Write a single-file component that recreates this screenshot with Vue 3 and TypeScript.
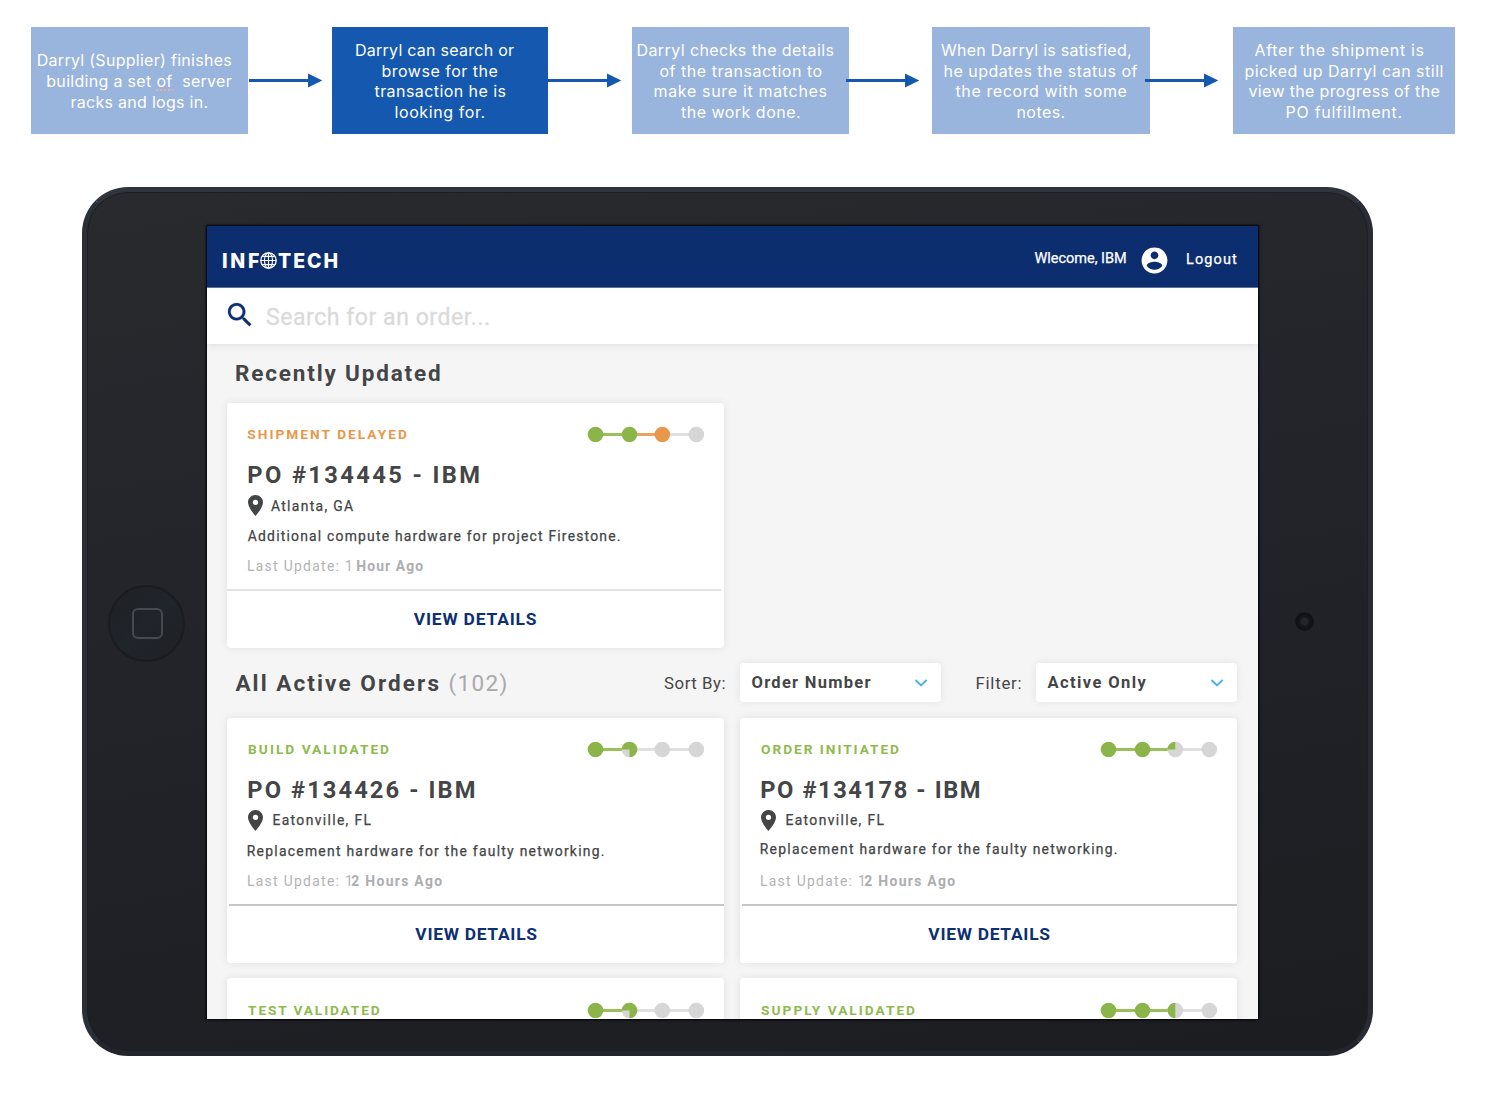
<script setup lang="ts">
import type { Directive } from 'vue'

interface Line { text: string; width: number; typo?: [string, string, string] }
interface Step { lines: Line[]; active?: boolean; width: number; gap: number; shift: number }
interface Dot { x: number; base: string; pie?: string }
interface Body {
  title: Line
  place: Line
  placeGap: number
  note: Line
  noteShift: number
  when: Line
  action: Line
  actionShift: number
  digit: boolean
}
interface Order {
  status: Line
  tone: 'green' | 'orange'
  progress: number
  body?: Body
}

const canvas = document.createElement('canvas').getContext('2d')!

// Tracks a run of text out so that its ink fills the given width.
const vFit: Directive<HTMLElement, number> = {
  mounted(el, { value }) {
    const style = getComputedStyle(el)
    const text = el.textContent ?? ''
    canvas.font = `${style.fontWeight} ${style.fontSize} ${style.fontFamily}`
    const m = canvas.measureText(text)
    const ink = m.actualBoundingBoxLeft + m.actualBoundingBoxRight
    el.style.width = `${value}px`
    el.style.textIndent = `${m.actualBoundingBoxLeft}px`
    el.style.letterSpacing = `${(value - ink) / (text.length - 1)}px`
  },
}

const steps: Step[] = [
  {
    width: 217, gap: 84, shift: 1,
    lines: [
      { text: 'Darryl (Supplier) finishes', width: 193.5 },
      { text: 'building a set of  server', width: 184.5, typo: ['building a set ', 'of', '  server'] },
      { text: 'racks and logs in.', width: 136 },
    ],
  },
  {
    width: 216, gap: 84, shift: 0, active: true,
    lines: [
      { text: 'Darryl can search or', width: 158 },
      { text: 'browse for the', width: 115 },
      { text: 'transaction he is', width: 131 },
      { text: 'looking for.', width: 89 },
    ],
  },
  {
    width: 217, gap: 83, shift: -3,
    lines: [
      { text: 'Darryl checks the details', width: 196 },
      { text: 'of the transaction to', width: 162 },
      { text: 'make sure it matches', width: 172 },
      { text: 'the work done.', width: 119 },
    ],
  },
  {
    width: 218, gap: 83, shift: -5,
    lines: [
      { text: 'When Darryl is satisfied,', width: 190 },
      { text: 'he updates the status of', width: 193 },
      { text: 'the record with some', width: 171 },
      { text: 'notes.', width: 47 },
    ],
  },
  {
    width: 222, gap: 0, shift: 0,
    lines: [
      { text: 'After the shipment is', width: 169 },
      { text: 'picked up Darryl can still', width: 197 },
      { text: 'view the progress of the', width: 191 },
      { text: 'PO fulfillment.', width: 115 },
    ],
  },
]

const recent: Order = {
  status: { text: 'SHIPMENT DELAYED', width: 160 }, tone: 'orange', progress: 3,
  body: {
    title: { text: 'PO #134445 - IBM', width: 231 },
    place: { text: 'Atlanta, GA', width: 82 }, placeGap: 8,
    note: { text: 'Additional compute hardware for project Firestone.', width: 372 }, noteShift: 0,
    digit: false, when: { text: 'Hour Ago', width: 67 },
    action: { text: 'VIEW DETAILS', width: 123 }, actionShift: -1,
  },
}

const common = {
  place: { text: 'Eatonville, FL', width: 98 }, placeGap: 10.5,
  note: { text: 'Replacement hardware for the faulty networking.', width: 356 }, noteShift: 0,
  digit: true, when: { text: '2 Hours Ago', width: 91 },
  action: { text: 'VIEW DETAILS', width: 122 }, actionShift: 1,
}
const orders: Order[] = [
  { status: { text: 'BUILD VALIDATED', width: 141 }, tone: 'green', progress: 1.75, body: { ...common, title: { text: 'PO #134426 - IBM', width: 226.5 } } },
  { status: { text: 'ORDER INITIATED', width: 138 }, tone: 'green', progress: 2.25, body: { ...common, title: { text: 'PO #134178 - IBM', width: 218.5 }, noteShift: -2 } },
  { status: { text: 'TEST VALIDATED', width: 132 }, tone: 'green', progress: 1.75 },
  { status: { text: 'SUPPLY VALIDATED', width: 154 }, tone: 'green', progress: 2.5 },
]

const GREEN = '#8bb548'
const ORANGE = '#e8984a'
const GREY = '#d6d6d6'
const xs = [8, 42, 74.8, 108.8]

// Filled share of a partly reached stop.
function pie(x: number, part: number): string | undefined {
  if (part === 0.25) return `M${x} 8H${x - 7.8}A7.8 7.8 0 0 1 ${x} .2Z`
  if (part === 0.5) return `M${x} 15.8A7.8 7.8 0 0 1 ${x} .2Z`
  if (part === 0.75) return `M${x} 8H${x - 7.8}A7.8 7.8 0 1 1 ${x} 15.8Z`
  return undefined
}
function dots(o: Order): Dot[] {
  return xs.map((x, i) => {
    const part = Math.min(1, Math.max(0, o.progress - i))
    const full = o.tone === 'orange' && i === 2 ? ORANGE : GREEN
    return { x, base: part === 1 ? full : GREY, pie: pie(x, part) }
  })
}
function links(o: Order) {
  return [0, 1, 2].map((i) => ({
    x: xs[i], w: xs[i + 1] - xs[i],
    fill: o.progress > i + 1 ? (o.tone === 'orange' && i === 1 ? '#eaa35e' : '#98c15c') : '#e0e0e0',
  }))
}

const sections = [
  { name: 'recent', cards: [recent] },
  { name: 'active', cards: orders },
]
</script>

<template>
  <div class="page">
    <div class="steps">
      <template v-for="(s, i) in steps" :key="i">
        <div class="step" :class="{ active: s.active }" :style="{ width: s.width + 'px' }">
          <div v-for="l in s.lines" :key="l.text" class="step-line">
            <span v-fit="l.width" class="fit"><template v-if="l.typo">{{ l.typo[0] }}<span class="typo">{{ l.typo[1] }}</span>{{ l.typo[2] }}</template><template v-else>{{ l.text }}</template></span>
          </div>
        </div>
        <div v-if="s.gap" class="link" :style="{ width: s.gap + 'px' }">
          <svg width="74" height="16" viewBox="0 0 74 16" :style="{ marginLeft: s.shift + 'px' }">
            <path d="M0 6H59V9H0Z" fill="#1558b0" />
            <path d="M59 .4L73.3 7.4L59 14.6Z" fill="#1558b0" />
          </svg>
        </div>
      </template>
    </div>

    <div class="tablet">
      <div class="home"><i></i></div>
      <div class="screen">
        <header class="bar">
          <div class="logo">
            <span v-fit="36" class="fit">INF</span>
            <svg class="globe" width="17" height="17" viewBox="0 0 17 17" fill="none" stroke="#fff">
              <circle cx="8.5" cy="8.5" r="7.7" stroke-width="1.3" />
              <ellipse cx="8.5" cy="8.5" rx="4" ry="7.7" stroke-width="1.1" />
              <path d="M8.5 .8V16.2M.8 8.5H16.2M2.3 4.4H14.7M2.3 12.6H14.7" stroke-width="1.1" />
            </svg>
            <span v-fit="59.5" class="fit">TECH</span>
          </div>
          <div class="user">
            <span v-fit="91.5" class="fit hello">Wlecome, IBM</span>
            <svg class="avatar" width="31" height="31" viewBox="0 0 24 24" fill="#fff">
              <path d="M12 2C6.48 2 2 6.48 2 12s4.48 10 10 10 10-4.48 10-10S17.52 2 12 2zm0 3c1.66 0 3 1.34 3 3s-1.34 3-3 3-3-1.34-3-3 1.34-3 3-3zm0 14.2c-2.5 0-4.71-1.28-6-3.22.03-1.99 4-3.08 6-3.08 1.99 0 5.97 1.09 6 3.08-1.29 1.94-3.5 3.22-6 3.22z" />
            </svg>
            <span v-fit="50" class="fit logout">Logout</span>
          </div>
        </header>

        <div class="search">
          <svg width="32" height="32" viewBox="0 0 24 24" fill="#0d2f73" stroke="#0d2f73" stroke-width=".2">
            <path d="M15.5 14h-.79l-.28-.27C15.41 12.59 16 11.11 16 9.5 16 5.91 13.09 3 9.5 3S3 5.91 3 9.5 5.91 16 9.5 16c1.61 0 3.09-.59 4.23-1.57l.27.28v.79l5 4.99L20.49 19l-4.99-5zm-6 0C7.01 14 5 11.99 5 9.5S7.01 5 9.5 5 14 7.01 14 9.5 11.99 14 9.5 14z" />
          </svg>
          <span v-fit="223" class="fit hint">Search for an order...</span>
        </div>

        <template v-for="sec in sections" :key="sec.name">
          <div v-if="sec.name === 'recent'" class="heading first">
            <h2><span v-fit="204" class="fit">Recently Updated</span></h2>
          </div>
          <div v-else class="heading second">
            <h2><span v-fit="203" class="fit">All Active Orders</span></h2>
            <span v-fit="57" class="fit count">(102)</span>
            <span v-fit="60.5" class="fit label sort">Sort By:</span>
            <div class="select">
              <span v-fit="119" class="fit">Order Number</span>
              <svg width="14" height="10" viewBox="0 0 14 10"><path d="M1.5 2L7 7.4L12.5 2" fill="none" stroke="#4db2ea" stroke-width="2" /></svg>
            </div>
            <span v-fit="44" class="fit label filter">Filter:</span>
            <div class="select">
              <span v-fit="99" class="fit">Active Only</span>
              <svg width="14" height="10" viewBox="0 0 14 10"><path d="M1.5 2L7 7.4L12.5 2" fill="none" stroke="#4db2ea" stroke-width="2" /></svg>
            </div>
          </div>

          <div class="cards">
            <article v-for="o in sec.cards" :key="o.status.text" class="card" :class="sec.name">
              <div class="top">
                <span v-fit="o.status.width" class="fit status" :class="o.tone">{{ o.status.text }}</span>
                <svg width="118" height="17" viewBox="-.5 -.5 118 17">
                  <rect v-for="(k, i) in links(o)" :key="'l' + i" :x="k.x" y="6.5" :width="k.w" height="3" :fill="k.fill" />
                  <template v-for="(d, i) in dots(o)" :key="i">
                    <circle :cx="d.x" cy="8" r="7.8" :fill="d.base" />
                    <path v-if="d.pie" :d="d.pie" fill="#8bb548" />
                  </template>
                </svg>
              </div>
              <template v-if="o.body">
                <h3><span v-fit="o.body.title.width" class="fit">{{ o.body.title.text }}</span></h3>
                <div class="place">
                  <svg width="15" height="21" viewBox="5 2 14 20" preserveAspectRatio="none"><path d="M12 2C8.13 2 5 5.13 5 9c0 5.25 7 13 7 13s7-7.75 7-13c0-3.87-3.13-7-7-7zm0 9.5a2.5 2.5 0 0 1 0-5 2.5 2.5 0 0 1 0 5z" fill="#444546" /></svg>
                  <span v-fit="o.body.place.width" class="fit" :style="{ marginLeft: o.body.placeGap + 'px' }">{{ o.body.place.text }}</span>
                </div>
                <p class="note" :style="{ top: o.body.noteShift + 'px' }"><span v-fit="o.body.note.width" class="fit">{{ o.body.note.text }}</span></p>
                <p class="when">
                  <span v-fit="102" class="fit">Last Update: 1</span>
                  <b v-fit="o.body.when.width" class="fit" :class="{ close: o.body.digit }">{{ o.body.when.text }}</b>
                </p>
                <div class="rule"></div>
                <div class="action"><span v-fit="o.body.action.width" class="fit" :style="{ marginLeft: o.body.actionShift + 'px' }">{{ o.body.action.text }}</span></div>
              </template>
            </article>
          </div>
        </template>
      </div>
      <div class="camera"></div>
    </div>
  </div>
</template>

<style>
body { background: #fff; }
</style>

<style scoped>
* { box-sizing: border-box; }
.page { width: 1492px; height: 1110px; overflow: hidden; font-family: Roboto, "Open Sans", sans-serif; color: #444546; }
.fit { display: inline-block; white-space: pre; flex: none; text-align: left; font-kerning: normal; font-variant-ligatures: none; }

.steps { display: flex; align-items: stretch; height: 107px; margin: 27px 0 0 31px; }
.step { flex: none; display: flex; flex-direction: column; justify-content: center; background: #99b4dd; color: #fff; font: 400 16px/20.7px Inter, "Open Sans", sans-serif; padding: 1.6px 0 0; }
.step.active { background: #1558b0; }
.step-line { display: flex; justify-content: center; height: 20.7px; }
.step-line:first-child { padding-right: 10px; }
.typo { background: repeating-linear-gradient(90deg, #f5a9a3 0 2.4px, transparent 2.4px 4px) 0 100% / 100% 2px no-repeat; }
.link { flex: none; position: relative; z-index: 1; padding-top: 46px; }
.link svg { display: block; overflow: visible; }

.tablet { display: flex; width: 1291px; height: 869px; margin: 53px 0 0 82px; border-radius: 46px; border: 5px solid #30343c; background: linear-gradient(170deg, #282a2e 0%, #222429 45%, #1c1d21 100%); box-shadow: inset 0 0 0 1px #1d1f23; border-color: #30343c #292c33 #22252b #2b2f36; }
.home { flex: none; width: 77px; height: 77px; margin: 393px 22px 0 21px; border-radius: 50%; border: 2px solid #1b1c20; background: linear-gradient(135deg, #1f2024, #20242b 50%, #1f2024); display: flex; align-items: center; justify-content: center; }
.home i { width: 31px; height: 31px; border: 2px solid #48494d; border-radius: 6px; margin: 0 0 1px 1px; }
.screen { flex: none; width: 1051px; height: 793px; margin: 34px 0 0 0; background: #f5f5f5; overflow: hidden; box-shadow: 0 0 2px 1px #000; }
.camera { flex: none; width: 19px; height: 19px; border-radius: 50%; margin: 420px 0 0 37px; background: radial-gradient(circle, #22252b 0 3px, #15161a 5px, #101114 8px, #17181b 10px); }

.bar { display: flex; justify-content: space-between; height: 62px; background: #0d2e6e; border-bottom: 1px solid #5f76a3; color: #fff; padding: 0 21px 0 16px; }
.logo { display: flex; align-items: center; padding-top: 8px; font: 800 19.5px/24px Inter, sans-serif; }
.globe { margin: 0 1px 1px 1px; }
.user { display: flex; align-items: center; font-size: 14.5px; line-height: 20px; font-weight: 400; -webkit-text-stroke: .25px; }
.hello { margin-top: 4px; }
.avatar { margin: 8px 17px 0 13px; }
.logout { margin-top: 6px; }

.search { position: relative; display: flex; align-items: center; height: 56px; background: #fff; padding: 0 0 0 17px; font-size: 23px; line-height: 30px; color: #dadada; -webkit-text-stroke: .3px; box-shadow: 0 1px 8px rgba(0, 0, 0, .1); }
.search svg { margin: -2px 10px 0 0; }
.hint { margin-top: 3px; }

.heading { display: flex; align-items: center; }
.heading h2 { margin: 0; font-size: 22.5px; line-height: 30px; font-weight: 700; display: flex; }
.first { height: 58.5px; padding-left: 29px; }
.second { height: 69.5px; padding: 0 21px 0 28.4px; }
.count { font-size: 22.5px; line-height: 30px; color: #a9a9ab; margin-left: 11px; }
.label { font-size: 16.8px; line-height: 24px; padding-top: 1px; }
.sort { margin-left: auto; }
.filter { margin-left: 35.5px; }
.select { display: flex; align-items: center; justify-content: space-between; width: 201px; height: 39px; margin-left: 15.5px; padding: 0 13.5px 0 11.5px; border-radius: 4px; background: #fff; box-shadow: 0 0 8px rgba(0, 0, 0, .08); font-size: 16.5px; line-height: 24px; font-weight: 700; }

.cards { display: grid; grid-template-columns: 497px 497px; gap: 15px 16px; padding-left: 20.3px; }
.card { height: 245.5px; padding-top: 20px; background: #fff; border-radius: 4px; box-shadow: 0 0 8px rgba(0, 0, 0, .09); }
.top { display: flex; align-items: center; justify-content: space-between; height: 24px; padding: 0 19.5px 0 20px; font-weight: 700; font-size: 13.7px; line-height: 24px; }
.active .status { position: relative; left: .8px; }
.status { margin-top: -1px; }
.green { color: #8fba4e; }
.orange { color: #e8984a; }
.card h3 { display: flex; margin: 8px 0 0; padding-left: 21px; font-size: 23.7px; line-height: 40px; font-weight: 700; }
.place { display: flex; align-items: center; height: 22px; padding-left: 20.7px; font-size: 13.9px; line-height: 22px; -webkit-text-stroke: .25px; }
.active .place .fit { margin-top: -2px; }
.note { position: relative; display: flex; margin: 7px 0 0; padding-left: 20.5px; font-size: 13.9px; line-height: 24px; -webkit-text-stroke: .25px; }
.when { display: flex; margin: 6px 0 0; padding-left: 20.7px; font-size: 13.9px; line-height: 24px; color: #b2b3b5; }
.when b { margin-left: 6.3px; color: #adaeb0; }
.when b.close { margin-left: 1.3px; }
.rule { height: 1.5px; margin: 11.5px 3px 0 0; background: #e2e2e2; }
.active .rule { margin: 11.5px 0 0 2px; background: #c6c7c8; }
.action { display: flex; justify-content: center; align-items: center; height: 57px; padding-bottom: 1px; color: #0d2f73; font-size: 17.4px; line-height: 24px; font-weight: 700; }
</style>
